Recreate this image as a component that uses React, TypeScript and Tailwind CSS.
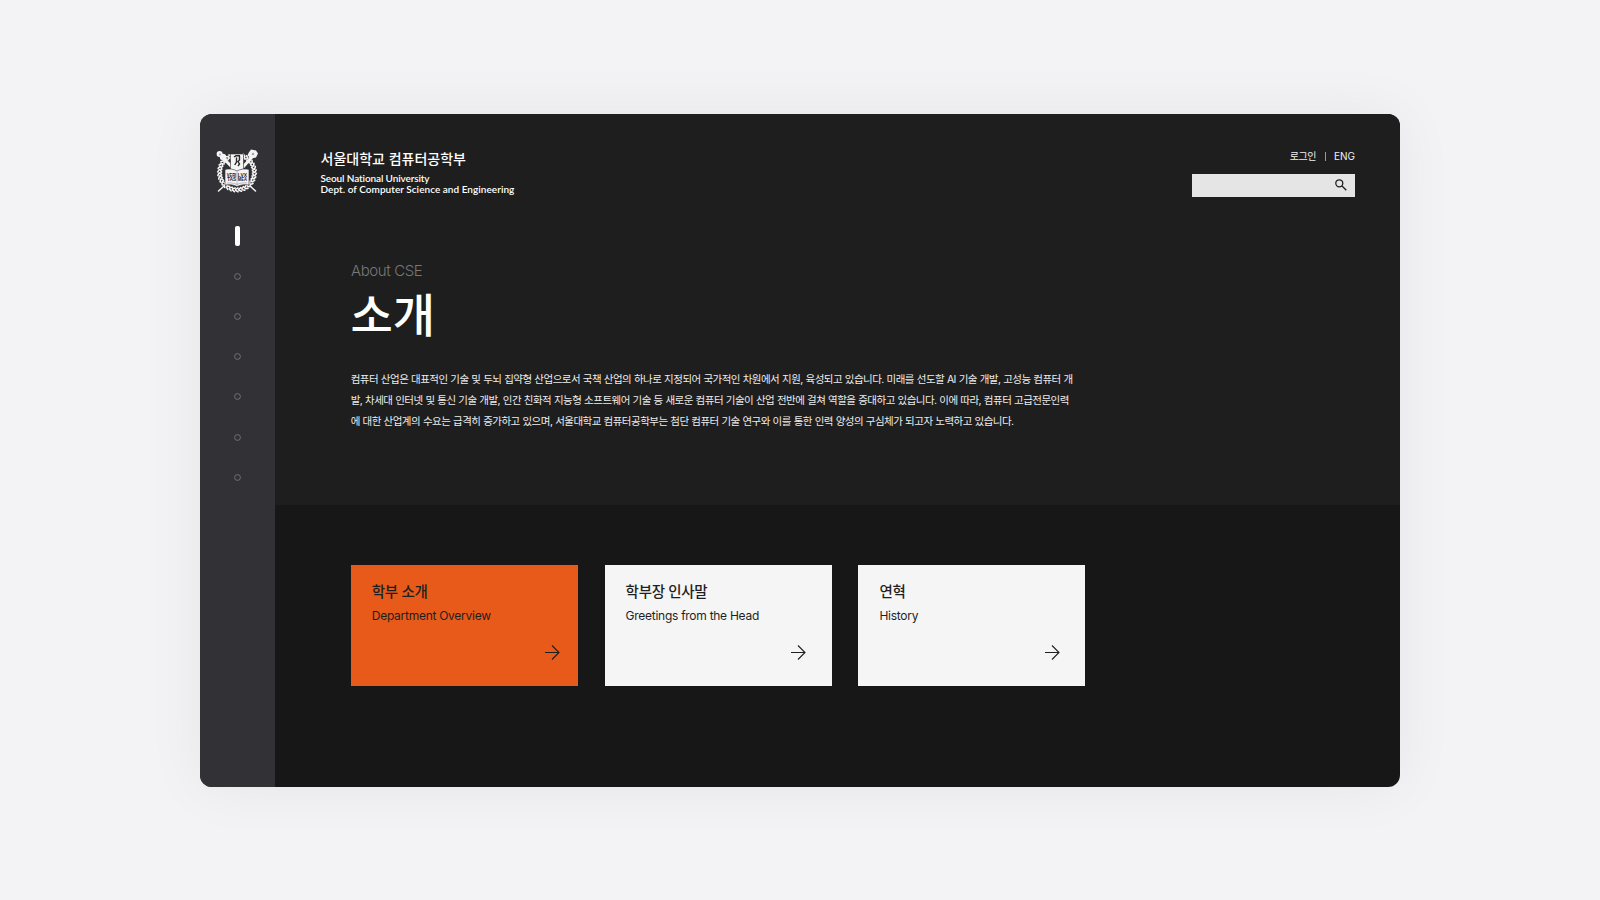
const CARDS = [
  { ko: "학부 소개", en: "Department Overview", box: "bg-[#e85a19] pr-[18px]" },
  { ko: "학부장 인사말", en: "Greetings from the Head", box: "bg-[#f5f5f5] pr-[26px]" },
  { ko: "연혁", en: "History", box: "bg-[#f5f5f5] pr-[25.500px]" },
];

const LEAVES = Array.from({ length: 31 }, (_, i) => 22 + i * (316 / 30));

function Emblem() {
  return (
    <svg viewBox="0 0 42 44" className="mr-px h-[44px] w-[42px] overflow-visible" fill="none" stroke="#f4f4f4">
      {LEAVES.map((a) => (
        <g key={a} transform={`rotate(${a} 21 23.5)`} strokeWidth="1.6" strokeLinecap="round">
          <path d="M20 4.200l2.400 1.400M20 8l2.400-1.400" />
        </g>
      ))}
      <g strokeLinecap="round">
        <path d="M7 9l9 9M36 8l-9 10" strokeWidth="3" />
        <path d="M8 37l-5.500 5M34 37l5.500 5" strokeWidth="1.500" />
      </g>
      <g fill="#f4f4f4" stroke="none">
        <circle cx="3.600" cy="5" r="3" />
        <circle cx="7" cy="8" r="3.200" />
        <path d="M32.500 4l2.500-3.500 5 1 2 3-2 4-5 1-3.500-3z" />
        <path d="M14.500 5h13v14c0 3-3.500 5-6.500 5.500-3-.5-6.500-2.500-6.500-5.500z" stroke="#313035" strokeWidth=".6" />
        <path d="M9 20.500c4.500-1 8.500-.5 12 1.500 3.500-2 7.500-2.500 12-1.500v15.500c-4-.8-8-.3-12 1.500-3.500-1.800-8-2.300-12-1.500z" stroke="#313035" strokeWidth=".6" />
      </g>
      <circle cx="4" cy="5.500" r="1" fill="#a2a1a5" stroke="none" />
      <circle cx="37" cy="5" r="1.200" fill="#a2a1a5" stroke="none" />
      <path d="M18 8l2-1.200h4M23.500 7v4l-1.500 1.500 1.500 2.500-1.500 2M20.500 8.500v4.500l-1.800 3" stroke="#29282c" strokeWidth="1.400" />
      <path d="M21 22v14M11 34c3.500-.5 7 0 10 1.500 3-1.500 6.500-2 10-1.500" stroke="#a2a1a5" strokeWidth=".7" />
      <g fill="#222125" stroke="none" className="font-['Liberation_Sans'] text-[5px] font-bold">
        <text x="10.800" y="27.500" textLength="9.400" lengthAdjust="spacingAndGlyphs">VERI</text>
        <text x="21.800" y="27.500" textLength="9.200" lengthAdjust="spacingAndGlyphs">LVX</text>
        <text x="11.200" y="32.300" textLength="8.800" lengthAdjust="spacingAndGlyphs">TAS</text>
        <text x="21.800" y="32.300" textLength="9.200" lengthAdjust="spacingAndGlyphs">MEA</text>
      </g>
    </svg>
  );
}

function Arrow() {
  return (
    <svg viewBox="0 0 16 16" className="size-4" fill="none" stroke="#1f1f1f" strokeWidth="1.100">
      <path d="M1 8.500h14M8 1.500l7 7-7 7" />
    </svg>
  );
}

export default function App() {
  return (
    <div className="flex h-[900px] w-[1600px] justify-center bg-[#f3f3f5] pt-[114px] font-['Inter','Noto_Sans_CJK_KR',sans-serif]">
      <div className="flex h-[672.500px] w-[1200px] overflow-hidden rounded-[12px] bg-[#171717] shadow-[0_0_60px_rgba(0,0,0,0.06)]">
        <nav className="flex w-[75px] shrink-0 flex-col items-center bg-[#323136] pt-[35px]">
          <Emblem />
          <div className="mt-[33px] h-[20px] w-[5px] rounded-[2px] bg-white" />
          <div className="mt-[26.500px] flex flex-col gap-[33.300px]">
            {[0, 1, 2, 3, 4, 5].map((n) => (
              <svg key={n} viewBox="0 0 7 7" className="size-[7px]" fill="none" stroke="#77767b" strokeWidth=".9">
                <circle cx="3.500" cy="3.500" r="2.900" />
              </svg>
            ))}
          </div>
        </nav>
        <main className="flex flex-1 flex-col">
          <section className="h-[390.500px] bg-[#1e1e1e] pr-[45px] pl-[45px]">
            <header className="flex h-[110px] justify-between pt-[35px]">
              <div className="text-white">
                <div className="pl-[.5px] text-[14px] leading-[20px] font-medium whitespace-nowrap">서울대학교 컴퓨터공학부</div>
                <div className="mt-[3.500px] pl-[.5px] font-['Lato',sans-serif] text-[10px] leading-[11px] font-semibold whitespace-nowrap">
                  <p className="tracking-[-0.120px]">Seoul National University</p>
                  <p className="tracking-[0.040px]">Dept. of Computer Science and Engineering</p>
                </div>
              </div>
              <div className="flex flex-col items-end">
                <div className="flex h-[14px] items-center text-[10px] text-[#f0f0f0]">
                  <span className="tracking-[-0.450px]">로그인</span>
                  <span className="mr-[8px] ml-[9px] h-[9px] w-px bg-[#9a9a9a]" />
                  <span>ENG</span>
                </div>
                <div className="mt-[10.500px] flex h-[23px] w-[163.500px] items-center justify-end bg-[#e5e5e5] pr-[8px]">
                  <svg viewBox="0 0 12 12" className="size-3" fill="none" stroke="#1f1f1f" strokeWidth="1.300">
                    <circle cx="4.300" cy="4.300" r="3.500" />
                    <path d="M6.800 6.800l4.500 4.500" />
                  </svg>
                </div>
              </div>
            </header>
            <div className="pt-[38px] pl-[31px]">
              <p className="text-[15px] leading-[18px] font-light tracking-[-0.400px] text-[#777777]">About CSE</p>
              <h1 className="-ml-[.5px] mt-[4.500px] text-[46px] leading-[60px] font-medium text-white">소개</h1>
              <div className="-ml-[.3px] mt-[24px] text-[10.500px] leading-[21.300px] tracking-[-0.520px] [word-spacing:0.300px] whitespace-nowrap text-[#ededed]">
                <p>컴퓨터 산업은 대표적인 기술 및 두뇌 집약형 산업으로서 국책 산업의 하나로 지정되어 국가적인 차원에서 지원, 육성되고 있습니다. 미래를 선도할 AI 기술 개발, 고성능 컴퓨터 개</p>
                <p>발, 차세대 인터넷 및 통신 기술 개발, 인간 친화적 지능형 소프트웨어 기술 등 새로운 컴퓨터 기술이 산업 전반에 걸쳐 역할을 증대하고 있습니다. 이에 따라, 컴퓨터 고급전문인력</p>
                <p>에 대한 산업계의 수요는 급격히 증가하고 있으며, 서울대학교 컴퓨터공학부는 첨단 컴퓨터 기술 연구와 이를 통한 인력 양성의 구심체가 되고자 노력하고 있습니다.</p>
              </div>
            </div>
          </section>
          <section className="flex gap-[26.800px] pt-[60.500px] pl-[75.800px]">
            {CARDS.map((c) => (
              <a key={c.ko} className={`flex h-[121px] w-[227px] flex-col pt-[16px] pl-[21px] text-[#1f1f1f] ${c.box}`}>
                <span className="text-[14.500px] leading-[22px] font-medium tracking-[-0.300px]">{c.ko}</span>
                <span className="mt-[4px] text-[12px] leading-[18px] tracking-[-0.270px]">{c.en}</span>
                <span className="mt-[19px] flex justify-end"><Arrow /></span>
              </a>
            ))}
          </section>
        </main>
      </div>
    </div>
  );
}
